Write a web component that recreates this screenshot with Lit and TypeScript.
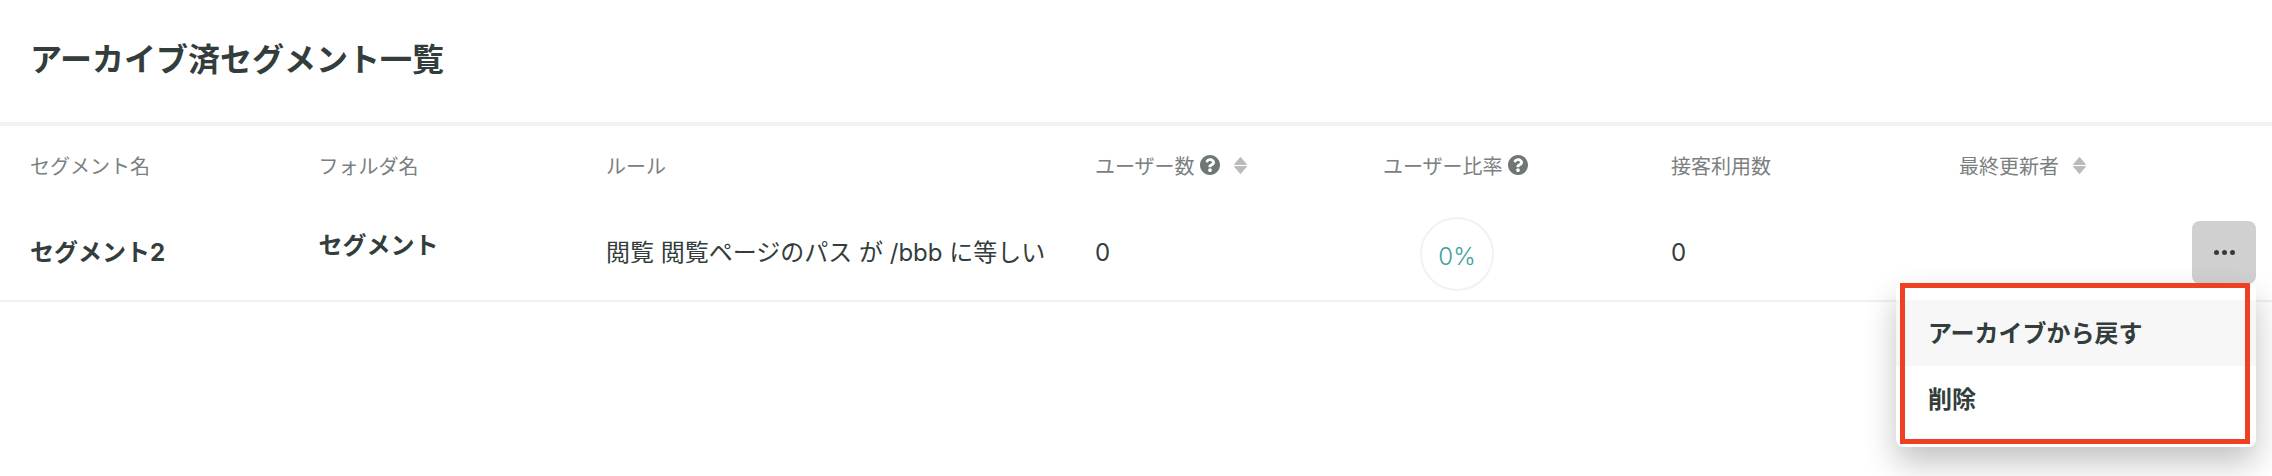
import { LitElement, html, css } from "lit";
import { customElement } from "lit/decorators.js";

const help = html`<svg class="help" viewBox="8 8 496 496"><path fill="currentColor" d="M504 256c0 136.997-111.043 248-248 248S8 392.997 8 256C8 119.083 119.043 8 256 8s248 111.083 248 248zM262.655 90c-54.497 0-89.255 22.957-116.549 63.758-3.536 5.286-2.353 12.415 2.715 16.258l34.699 26.31c5.205 3.947 12.621 3.008 16.665-2.122 17.864-22.658 30.113-35.797 57.303-35.797 20.429 0 45.698 13.148 45.698 32.958 0 14.976-12.363 22.667-32.534 33.976C247.128 238.528 216 254.941 216 296v4c0 6.627 5.373 12 12 12h56c6.627 0 12-5.373 12-12v-1.333c0-28.462 83.186-29.647 83.186-106.667 0-58.002-60.165-102-116.531-102zM256 338c-25.365 0-46 20.635-46 46 0 25.364 20.635 46 46 46s46-20.636 46-46c0-25.365-20.635-46-46-46z"/></svg>`;

const sort = html`<svg class="sort" viewBox="0 0 12 16"><path fill="currentColor" stroke="currentColor" stroke-width="1" stroke-linejoin="round" d="M6 .6 11.4 7H.6Z M.6 9H11.4L6 15.4Z"/></svg>`;

@customElement("app-root")
export class AppRoot extends LitElement {
  static styles = css`
    :host {
      display: block;
      height: 476px;
      overflow: hidden;
      background: #fff;
      color: #333d3b;
      font-family: Inter, "Noto Sans CJK JP", sans-serif;
    }
    h1 {
      margin: 0;
      height: 122px;
      box-sizing: border-box;
      padding: 38px 0 0 30px;
      font-size: 32px;
      line-height: 44px;
      font-weight: 700;
    }
    .grid {
      display: grid;
      grid-template-columns: 318.5px 287.5px 489px 288px 288px 288px 1fr;
      border-top: 4px solid #f2f2f2;
    }
    .head {
      height: 80px;
      box-sizing: border-box;
      padding-bottom: 2px;
      display: flex;
      align-items: center;
      gap: 5px;
      font-size: 20px;
      color: #7b807f;
    }
    .head:first-child,
    .first {
      padding-left: 30px;
    }
    .help {
      width: 20px;
      height: 20px;
      color: #6f7775;
    }
    .sort {
      width: 13px;
      height: 17px;
      margin-left: 9px;
      color: #b8bbba;
    }
    .cell {
      height: 96px;
      box-sizing: border-box;
      border-bottom: 2px solid #f0f0f0;
      display: flex;
      align-items: center;
      font-size: 24px;
      line-height: 32px;
      white-space: nowrap;
    }
    .bold {
      font-weight: 700;
    }
    .folder span {
      margin-bottom: 14px;
    }
    .ratio {
      padding: 2px 0 0 37px;
    }
    .circle {
      width: 74px;
      height: 74px;
      box-sizing: border-box;
      border: 2px solid #f2f2f2;
      border-radius: 50%;
      display: flex;
      align-items: center;
      justify-content: center;
      padding-top: 6px;
      font-size: 24px;
      font-weight: 300;
      color: #3f9ea0;
    }
    .actions {
      position: relative;
      justify-content: flex-end;
      padding: 0 16px 0 0;
    }
    .more {
      width: 64px;
      height: 63px;
      margin-bottom: 1px;
      border-radius: 8px;
      background: #cfd0cf;
      display: flex;
      align-items: center;
      justify-content: center;
      gap: 3px;
    }
    .more i {
      width: 5px;
      height: 5px;
      border-radius: 50%;
      background: #333d3b;
    }
    .menu {
      position: absolute;
      top: 77px;
      right: 16px;
      width: 360px;
      height: 164px;
      box-sizing: border-box;
      padding-top: 17px;
      background: #fff;
      border-radius: 8px;
      box-shadow: 0 16px 32px rgba(0, 0, 0, 0.24);
      z-index: 2;
    }
    .item {
      height: 66px;
      box-sizing: border-box;
      padding: 2px 0 0 32px;
      display: flex;
      align-items: center;
      font-size: 24px;
      font-weight: 700;
    }
    .item.active {
      background: #f7f7f7;
    }
    .mark {
      position: absolute;
      top: 0;
      left: 4px;
      right: 6px;
      bottom: 3px;
      border: 5px solid #f04023;
    }
  `;

  render() {
    return html`
      <h1>アーカイブ済セグメント一覧</h1>
      <div class="grid">
        <div class="head">セグメント名</div>
        <div class="head">フォルダ名</div>
        <div class="head">ルール</div>
        <div class="head">ユーザー数 ${help} ${sort}</div>
        <div class="head">ユーザー比率 ${help}</div>
        <div class="head">接客利用数</div>
        <div class="head">最終更新者 ${sort}</div>
        <div class="cell bold first">セグメント2</div>
        <div class="cell bold folder"><span>セグメント</span></div>
        <div class="cell">閲覧 閲覧ページのパス が /bbb に等しい</div>
        <div class="cell">0</div>
        <div class="cell ratio"><div class="circle">0%</div></div>
        <div class="cell">0</div>
        <div class="cell actions">
          <div class="more"><i></i><i></i><i></i></div>
          <div class="menu">
            <div class="item active">アーカイブから戻す</div>
            <div class="item">削除</div>
            <div class="mark"></div>
          </div>
        </div>
      </div>
    `;
  }
}
